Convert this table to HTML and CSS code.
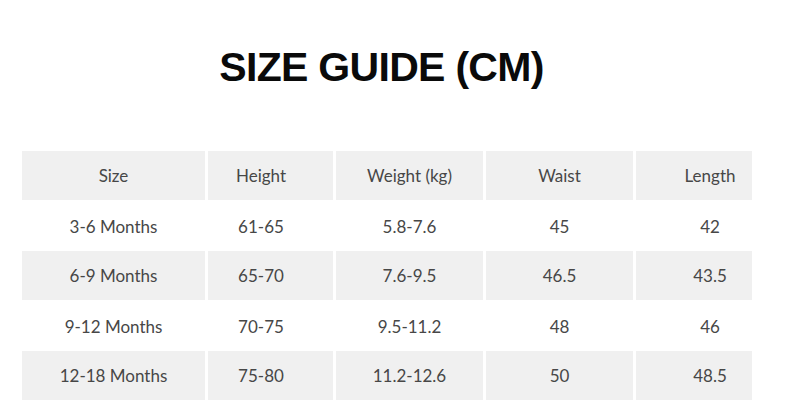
FILE: index.html
```html
<!DOCTYPE html>
<html>
<head>
<meta charset="utf-8">
<link rel="stylesheet" href="styles.css">
</head>
<body>
<div class="page">
  <h1 class="title">SIZE GUIDE (CM)</h1>
  <table class="guide">
    <colgroup>
      <col class="c1"><col class="c2"><col class="c3"><col class="c4"><col class="c5">
    </colgroup>
    <tr class="shade"><td>Size</td><td class="k2">Height</td><td>Weight (kg)</td><td>Waist</td><td class="k5">Length</td></tr>
    <tr><td>3-6 Months</td><td class="k2">61-65</td><td>5.8-7.6</td><td>45</td><td class="k5">42</td></tr>
    <tr class="shade"><td>6-9 Months</td><td class="k2">65-70</td><td>7.6-9.5</td><td>46.5</td><td class="k5">43.5</td></tr>
    <tr><td>9-12 Months</td><td class="k2">70-75</td><td>9.5-11.2</td><td>48</td><td class="k5">46</td></tr>
    <tr class="shade"><td>12-18 Months</td><td class="k2">75-80</td><td>11.2-12.6</td><td>50</td><td class="k5">48.5</td></tr>
  </table>
</div>
</body>
</html>
```
FILE: styles.css
```css
html, body {
  margin: 0;
  padding: 0;
  background: #ffffff;
}
.page {
  width: 788px;
  height: 405px;
  overflow: hidden;
}
.title {
  margin: 0;
  padding: 44px 25px 0 0;
  height: 151px;
  box-sizing: border-box;
  text-align: center;
  font-family: "Liberation Sans", Arial, sans-serif;
  font-weight: bold;
  font-size: 41px;
  letter-spacing: -0.7px;
  line-height: 47px;
  color: #0a0a0a;
}
.guide {
  margin-left: 19px;
  border-collapse: separate;
  border-spacing: 3px 0;
  table-layout: fixed;
  font-family: Lato, "Open Sans", sans-serif;
  font-size: 17px;
  color: #474747;
}
.c1 { width: 183px; }
.c2 { width: 125px; }
.c3 { width: 147px; }
.c4 { width: 147px; }
.c5 { width: 116px; }
.guide td {
  height: 50px;
  padding: 0;
  text-align: center;
  vertical-align: middle;
  box-sizing: border-box;
}
.guide .k2 { padding-right: 19px; }
.guide .k5 { padding-left: 32px; }
.shade td {
  background: #f0f0f0;
  border-bottom: 1px solid #ffffff;
}
```
